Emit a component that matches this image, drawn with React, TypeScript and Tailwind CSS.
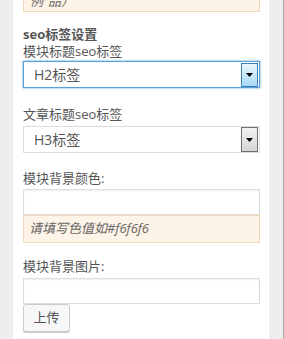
export default function App() {
  const font = { fontFamily: '"Open Sans", "Noto Sans CJK SC", sans-serif' };

  return (
    <div className="flex h-[339px] w-[284px] overflow-hidden bg-[#eeeeee] text-[#555555]" style={font}>
      <div className="w-[13px] shrink-0" />
      <div className="flex w-[256px] shrink-0 flex-col bg-white pl-[10px] pr-[9px]">
        {/* cut-off note from the field above */}
        <div className="-mt-[16px] flex h-[28px] items-end border border-[#f2d8b5] bg-[#fdf3e6] px-[6px] text-[13px] italic leading-[20px] text-[#666666]">
          例"品）
        </div>

        <div className="mt-[14px] text-[13px] font-bold leading-[17px]">seo标签设置</div>
        <div className="text-[13px] leading-[17px]">模块标题seo标签</div>
        <div className="mt-[1px] flex h-[27px] items-center border border-[#5b9dd9] bg-white pl-[10px] pr-[1px] shadow-[0_0_2px_rgba(30,140,190,0.8)]">
          <span className="flex-1 text-[14px]">H2标签</span>
          <div className="flex h-[24px] w-[17px] items-center justify-center border border-[#3c7fb1] bg-gradient-to-b from-[#eaf6fd] to-[#a7d9f5]">
            <svg width="7" height="4" viewBox="0 0 7 4">
              <path d="M0 0h7L3.5 4z" fill="#000" />
            </svg>
          </div>
        </div>

        <div className="mt-[18px] text-[13px] leading-[17px]">文章标题seo标签</div>
        <div className="mt-[3px] flex h-[27px] items-center border border-[#dddddd] bg-white pl-[10px] pr-[1px]">
          <span className="flex-1 text-[14px]">H3标签</span>
          <div className="flex h-[25px] w-[17px] items-center justify-center border border-[#707070] bg-gradient-to-b from-[#f2f2f2] to-[#d6d6d6]">
            <svg width="7" height="4" viewBox="0 0 7 4">
              <path d="M0 0h7L3.5 4z" fill="#000" />
            </svg>
          </div>
        </div>

        <div className="mt-[17px] text-[13px] leading-[17px]">模块背景颜色:</div>
        <div className="mt-[2px] h-[26px] border border-[#dddddd] bg-white shadow-[inset_0_1px_2px_rgba(0,0,0,0.07)]" />
        <div className="flex h-[28px] items-center border border-[#f2d8b5] bg-[#fdf3e6] px-[5px] text-[13px] italic text-[#666666]">
          请填写色值如#f6f6f6
        </div>

        <div className="mt-[15px] text-[13px] leading-[17px]">模块背景图片:</div>
        <div className="mt-[3px] h-[26px] border border-[#dddddd] bg-white shadow-[inset_0_1px_2px_rgba(0,0,0,0.07)]" />
        <button className="flex h-[28px] w-[47px] items-center justify-center rounded-[3px] border border-[#cccccc] bg-[#f7f7f7] text-[13px] text-[#555555] shadow-[0_1px_0_#cccccc]">
          上传
        </button>
      </div>
      <div className="flex-1 border-r border-[#a8a8a8]" />
    </div>
  );
}
